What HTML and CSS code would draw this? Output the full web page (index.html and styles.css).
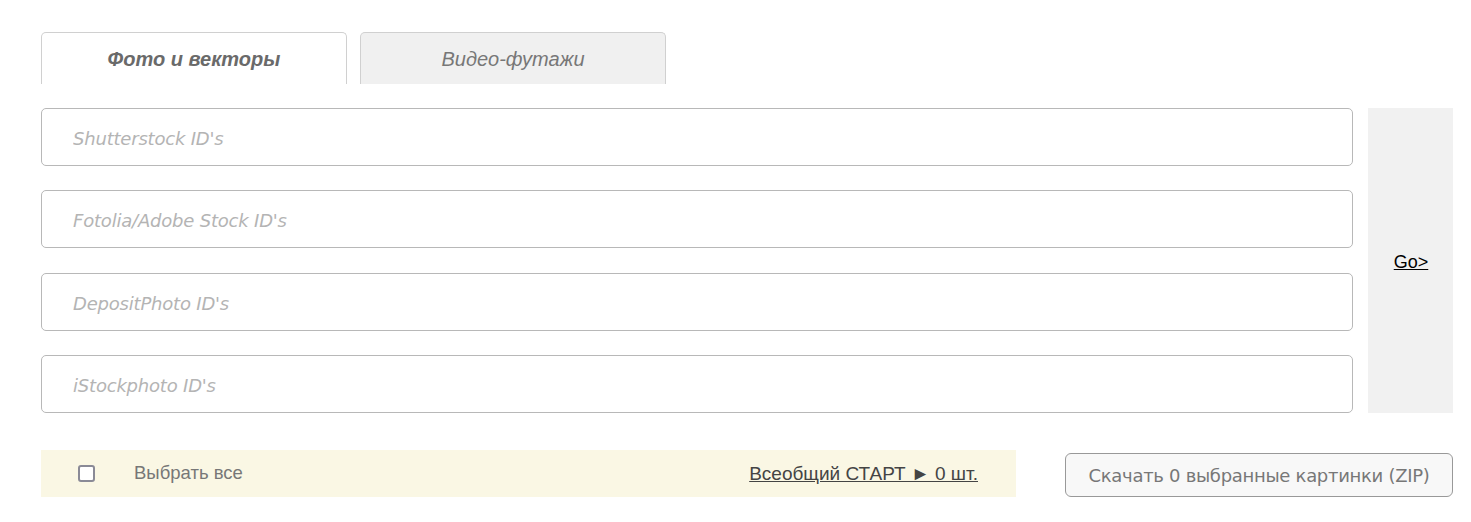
FILE: index.html
```html
<!DOCTYPE html>
<html>
<head>
<meta charset="utf-8">
<link rel="stylesheet" href="styles.css">
</head>
<body>
<div class="page">
  <div class="tabs">
    <div class="tab active">Фото и векторы</div>
    <div class="tab">Видео-футажи</div>
  </div>
  <div class="form">
    <div class="fields">
      <input class="field" type="text" placeholder="Shutterstock ID's">
      <input class="field gap2" type="text" placeholder="Fotolia/Adobe Stock ID's">
      <input class="field gap3" type="text" placeholder="DepositPhoto ID's">
      <input class="field" type="text" placeholder="iStockphoto ID's">
    </div>
    <div class="go"><a href="#">Go&gt;</a></div>
  </div>
  <div class="bottom">
    <div class="selbar">
      <span class="check"></span>
      <span class="selall">Выбрать все</span>
      <a class="start" href="#">Всеобщий СТАРТ ► 0 шт.</a>
    </div>
    <button class="zip">Скачать 0 выбранные картинки (ZIP)</button>
  </div>
</div>
</body>
</html>
```
FILE: styles.css
```css
html, body { margin: 0; padding: 0; background: #fff; }
.page { padding: 32px 18px 0 41px; }
.tabs { display: flex; gap: 13px; height: 52px; }
.tab {
  width: 304px;
  border: 1px solid #d0d0d0;
  border-bottom: none;
  border-radius: 5px 5px 0 0;
  background: #f0f0f0;
  font-family: "Liberation Sans", Arial, sans-serif;
  font-style: italic;
  font-size: 20px;
  color: #777;
  display: flex; align-items: center; justify-content: center;
  padding-top: 2px;
}
.tab.active { background: #fff; font-weight: bold; color: #6a6a6a; }
.form { display: flex; gap: 15px; margin-top: 24px; }
.fields { width: 1312px; display: flex; flex-direction: column; gap: 24px; }
.field {
  box-sizing: border-box;
  height: 58px; margin: 0;
  border: 1px solid #b8b8b8;
  border-radius: 5px;
  padding: 2px 0 0 31px;
  font-family: "DejaVu Sans", Verdana, sans-serif;
  font-style: italic;
  font-size: 18px;
  letter-spacing: -0.2px;
  outline: none;
}
.field.gap3 { margin-top: 1px; }
.field::placeholder { color: #b4b4b4; }
.go {
  width: 85px;
  background: #f1f1f1;
  display: flex; align-items: center; justify-content: center;
}
.go a { font-family: "Liberation Sans", Arial, sans-serif; font-size: 18px; color: #000; text-decoration: underline; margin-left: 1px; margin-top: 4px; }
.bottom { display: flex; align-items: flex-start; margin-top: 37px; }
.selbar {
  width: 975px; height: 47px;
  background: #faf7e4;
  display: flex; align-items: center;
  font-family: "Liberation Sans", Arial, sans-serif;
}
.check {
  box-sizing: border-box;
  width: 17px; height: 17px;
  border: 2px solid #8a8a96;
  border-radius: 3px;
  margin-left: 37px;
  background: #fff;
}
.selall { margin-left: 39px; font-size: 18.5px; color: #777; margin-top: -2px; }
.start { margin-left: auto; margin-right: 38px; font-size: 19px; color: #444; text-decoration: underline; }
.zip {
  margin-left: 49px; margin-top: 3px;
  width: 388px; height: 44px;
  border: 1px solid #999;
  border-radius: 6px;
  background: #f8f8f8;
  font-family: "DejaVu Sans", Verdana, sans-serif;
  font-size: 18px;
  color: #777;
  letter-spacing: -0.3px;
  padding: 0;
}
```
